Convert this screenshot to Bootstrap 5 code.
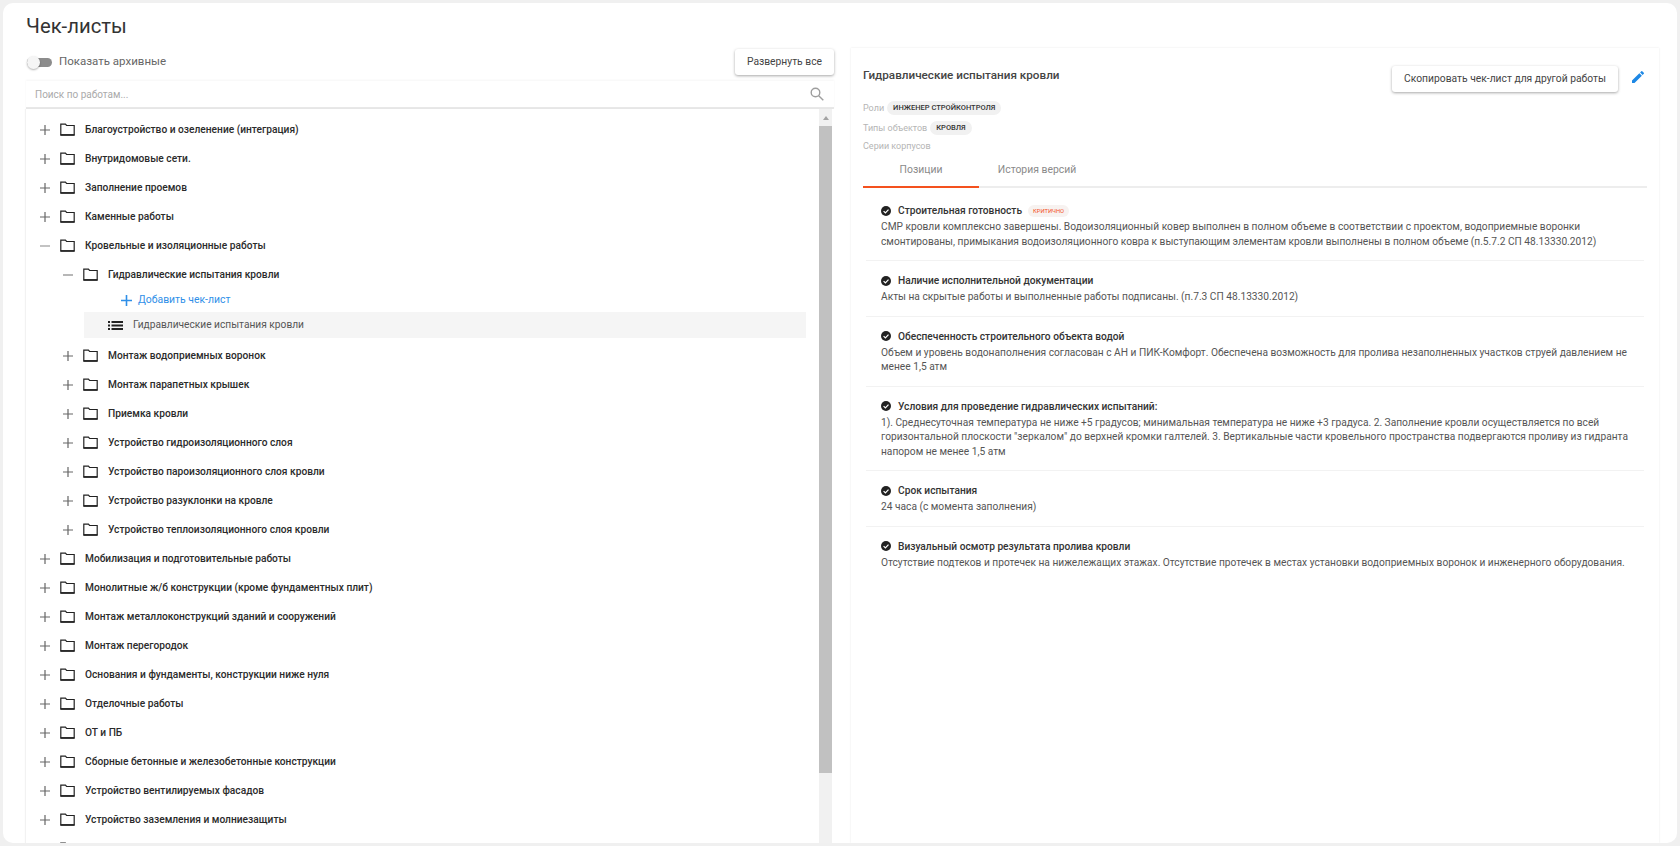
<!DOCTYPE html>
<html lang="ru">
<head>
  <meta charset="UTF-8">
  <title>Чек-листы</title>
  <link href="https://cdn.jsdelivr.net/npm/bootstrap@5.3.0/dist/css/bootstrap.min.css" rel="stylesheet">
  <style>
    html, body { height: 100%; overflow: hidden; }
    body {
      background: #f0f0f0;
      padding: 3px;
      font-family: Roboto, "Liberation Sans", sans-serif;
      font-size: 10.2px;
      color: #444;
    }
    .page-frame {
      height: 840px;
      background: #fff;
      border-radius: 10px;
      padding: 0 18px 0 23px;
      overflow: hidden;
    }
    .page-title { font-size: 20.3px; font-weight: 400; line-height: 24px; margin: 0; padding-top: 11px; height: 43px; color: #333; }
    .left-col { width: 808px; flex: none; }
    .right-col { width: 808px; margin: 2px 0 0 17px; height: 795px; padding: 0 12px; box-shadow: 0 0 2px rgba(0,0,0,.09); }
    .top-row { height: 32px; }
    .toggle-track { width: 25px; height: 9px; margin: 0 7px 0 1px; background: #8c8c8c; border-radius: 5px; position: relative; display: inline-block; }
    .toggle-knob { position: absolute; left: 0; top: -2px; width: 13px; height: 13px; border-radius: 50%; background: #f5f5f5; box-shadow: 0 1px 2px rgba(0,0,0,.3); }
    .toggle-label { font-size: 11.5px; color: #666; }
    .raised-btn {
      background: #fff;
      border: 0;
      border-radius: 3px;
      box-shadow: 0 1px 3px rgba(0,0,0,.35);
      font-size: 10.3px;
      color: #444;
      height: 26px;
      padding: 0 12px;
    }
    .search-box { height: 28px; border-bottom: 2px solid #e8e8e8; padding: 0 10px 0 9px; margin-top: 3px; box-shadow: 0 -1px 2px rgba(0,0,0,.04); }
    .search-hint { font-size: 10px; color: #aaa; }
    .tree-wrap { height: 734px; box-shadow: -1px 0 1px rgba(0,0,0,.05); }
    .tree-body { overflow: hidden; padding: 6px 13px 0 0; }
    .tree-row { height: 29px; font-weight: 500; font-size: 10.2px; color: #2b2b2b; }
    .tree-row .tree-sign { width: 12px; margin-left: 13px; margin-right: 9px; flex: none; }
    .tree-row .tree-folder { margin-right: 10px; flex: none; }
    .level-2 { padding-left: 23px; }
    .add-row { height: 22px; padding-left: 95px; color: #2f8fe8; font-size: 10.4px; }
    .add-row svg { margin-right: 6px; }
    .leaf-row { height: 26px; margin: 1px 0 3px 58px; background: #f5f5f5; padding-left: 24px; font-size: 10.2px; color: #555; }
    .leaf-row svg { margin-right: 10px; }
    .fake-scroll { width: 13px; margin-right: 2px; background: #f1f1f1; flex: none; }
    .scroll-arrow { width: 0; height: 0; border-left: 3.5px solid transparent; border-right: 3.5px solid transparent; border-bottom: 4px solid #a3a3a3; margin: 7px auto 6px; }
    .scroll-thumb { height: 647px; background: #c1c1c1; }
    .detail-head { height: 53px; padding-top: 18px; }
    .detail-title { font-size: 11.7px; font-weight: 500; color: #444; line-height: 18px; }
    .pencil-icon { margin: -4px 1px 0 12px; }
    .meta-row { font-size: 9px; color: #b5b5b5; line-height: 14px; }
    .meta-gap { margin-top: 6px; }
    .meta-last { margin-top: 4px; }
    .meta-chip { background: #f1f1f1; border-radius: 7px; height: 14px; line-height: 14px; padding: 0 6px; font-size: 7.5px; font-weight: 500; color: #333; margin-left: 3px; text-transform: uppercase; }
    .tabs-row { border-bottom: 2px solid #ededed; height: 34px; margin-top: 1px; }
    .tab-item { width: 116px; text-align: center; font-size: 10.4px; color: #8a8a8a; padding-top: 8px; margin-bottom: -2px; line-height: 16px; }
    .tab-item.is-active { border-bottom: 2px solid #f4511e; }
    .checks-list { padding: 3px 3px 0; }
    .check-item { padding: 11px 9px 11px 15px; border-bottom: 1px solid #f2f2f2; line-height: 14.5px; color: #555; font-size: 10.2px; }
    .check-item:last-child { border-bottom: 0; }
    .check-title { font-size: 10.2px; font-weight: 500; color: #333; line-height: 17px; margin-bottom: 1px; }
    .check-title svg { margin-right: 7px; }
    .crit-chip { background: #f7f2f0; border-radius: 6px; color: #f4511e; font-size: 5.8px; height: 12px; line-height: 12px; padding: 0 5px; margin-left: 6px; text-transform: uppercase; font-weight: 400; }
  </style>
</head>
<body>
  <div class="page-frame">
    <h1 class="page-title">Чек-листы</h1>
    <div class="d-flex">
      <div class="left-col">
        <div class="top-row d-flex align-items-center justify-content-between">
          <div class="d-flex align-items-center"><span class="toggle-track"><span class="toggle-knob"></span></span><span class="toggle-label">Показать архивные</span></div>
          <button type="button" class="raised-btn">Развернуть все</button>
        </div>
        <div class="search-box d-flex align-items-center justify-content-between">
          <span class="search-hint">Поиск по работам...</span>
          <svg width="14" height="14" viewBox="0 0 14 14" fill="none" stroke="#9e9e9e" stroke-width="1.4"><circle cx="5.5" cy="5.5" r="4.3"/><path d="M8.7 8.7 13.3 13.3"/></svg>
        </div>
        <div class="tree-wrap d-flex">
          <div id="tree" class="tree-body flex-grow-1"></div>
          <div class="fake-scroll"><div class="scroll-arrow"></div><div class="scroll-thumb"></div></div>
        </div>
      </div>
      <div class="right-col">
        <div class="detail-head d-flex justify-content-between align-items-start">
          <div class="detail-title">Гидравлические испытания кровли</div>
          <div class="d-flex align-items-center">
            <button type="button" class="raised-btn">Скопировать чек-лист для другой работы</button>
            <svg class="pencil-icon" width="16" height="16" viewBox="0 0 24 24" fill="#1e88e5"><path d="M3 17.25V21h3.75L17.81 9.94l-3.75-3.75L3 17.25zM20.71 7.04a1 1 0 0 0 0-1.41l-2.34-2.34a1 1 0 0 0-1.41 0l-1.83 1.83 3.75 3.75 1.83-1.83z"/></svg>
          </div>
        </div>
        <div class="meta-row d-flex align-items-center">Роли <span class="meta-chip">Инженер стройконтроля</span></div>
        <div class="meta-row meta-gap d-flex align-items-center">Типы объектов <span class="meta-chip">Кровля</span></div>
        <div class="meta-row meta-last">Серии корпусов</div>
        <div class="tabs-row d-flex">
          <div class="tab-item is-active">Позиции</div>
          <div class="tab-item">История версий</div>
        </div>
        <div id="checks" class="checks-list"></div>
      </div>
    </div>
  </div>

  <script>
    const folderIcon = '<svg class="tree-folder" width="15" height="13" viewBox="0 0 15 13" fill="none" stroke="#222"><path d="M.8 11.9V1.2h4.6l1.2 1.3h7.6v9.4z" stroke-width="1.2"/><path d="M.5 12h14" stroke-width="1.6"/></svg>';
    const plusIcon = '<svg class="tree-sign" width="12" height="12" viewBox="0 0 12 12" stroke="#666" stroke-width="1.2"><path d="M1 6h10M6 1v10"/></svg>';
    const minusIcon = '<svg class="tree-sign" width="12" height="12" viewBox="0 0 12 12" stroke="#888" stroke-width="1.2"><path d="M1 6h10"/></svg>';
    const checkIcon = '<svg width="10" height="10" viewBox="0 0 10 10"><circle cx="5" cy="5" r="5" fill="#222"/><path d="M2.6 5.1 4.4 6.9 7.5 3.6" fill="none" stroke="#fff" stroke-width="1.2"/></svg>';

    function row(name, open, nested) {
      return `<div class="tree-row d-flex align-items-center ${nested ? 'level-2' : ''}">${open ? minusIcon : plusIcon}${folderIcon}<span>${name}</span></div>`;
    }

    const before = ['Благоустройство и озеленение (интеграция)', 'Внутридомовые сети.', 'Заполнение проемов', 'Каменные работы'];
    const nested = ['Монтаж водоприемных воронок', 'Монтаж парапетных крышек', 'Приемка кровли', 'Устройство гидроизоляционного слоя', 'Устройство пароизоляционного слоя кровли', 'Устройство разуклонки на кровле', 'Устройство теплоизоляционного слоя кровли'];
    // last row is only a sliver at the window edge, its name can't be read
    const after = ['Мобилизация и подготовительные работы', 'Монолитные ж/б конструкции (кроме фундаментных плит)', 'Монтаж металлоконструкций зданий и сооружений', 'Монтаж перегородок', 'Основания и фундаменты, конструкции ниже нуля', 'Отделочные работы', 'ОТ и ПБ', 'Сборные бетонные и железобетонные конструкции', 'Устройство вентилируемых фасадов', 'Устройство заземления и молниезащиты', ''];

    let html = before.map(n => row(n)).join('');
    html += row('Кровельные и изоляционные работы', true);
    html += row('Гидравлические испытания кровли', true, true);
    html += '<div class="add-row d-flex align-items-center"><svg width="11" height="11" viewBox="0 0 11 11" stroke="#2f8fe8" stroke-width="1.6"><path d="M0 5.5h11M5.5 0v11"/></svg>Добавить чек-лист</div>';
    html += '<div class="leaf-row d-flex align-items-center"><svg width="15" height="9" viewBox="0 0 15 9" fill="#222"><path d="M0 0h2v2H0zM3.5 0H15v2H3.5zM0 3.5h2v2H0zM3.5 3.5H15v2H3.5zM0 7h2v2H0zM3.5 7H15v2H3.5z"/></svg>Гидравлические испытания кровли</div>';
    html += nested.map(n => row(n, false, true)).join('');
    html += after.map(n => row(n)).join('');
    document.getElementById('tree').innerHTML = html;

    const checks = [
      ['Строительная готовность', true, 'СМР кровли комплексно завершены. Водоизоляционный ковер выполнен в полном объеме в соответствии с проектом, водоприемные воронки смонтированы, примыкания водоизоляционного ковра к выступающим элементам кровли выполнены в полном объеме (п.5.7.2 СП 48.13330.2012)'],
      ['Наличие исполнительной документации', false, 'Акты на скрытые работы и выполненные работы подписаны. (п.7.3 СП 48.13330.2012)'],
      ['Обеспеченность строительного объекта водой', false, 'Объем и уровень водонаполнения согласован с АН и ПИК-Комфорт. Обеспечена возможность для пролива незаполненных участков струей давлением не менее 1,5 атм'],
      ['Условия для проведение гидравлических испытаний:', false, '1). Среднесуточная температура не ниже +5 градусов; минимальная температура не ниже +3 градуса. 2. Заполнение кровли осуществляется по всей горизонтальной плоскости "зеркалом" до верхней кромки галтелей. 3. Вертикальные части кровельного пространства подвергаются проливу из гидранта напором не менее 1,5 атм'],
      ['Срок испытания', false, '24 часа (с момента заполнения)'],
      ['Визуальный осмотр результата пролива кровли', false, 'Отсутствие подтеков и протечек на нижележащих этажах. Отсутствие протечек в местах установки водоприемных воронок и инженерного оборудования.']
    ];
    document.getElementById('checks').innerHTML = checks.map(c => `
      <div class="check-item">
        <div class="check-title d-flex align-items-center">${checkIcon}<span>${c[0]}</span>${c[1] ? '<span class="crit-chip">Критично</span>' : ''}</div>
        <div>${c[2]}</div>
      </div>`).join('');
  </script>
  <script src="https://cdn.jsdelivr.net/npm/bootstrap@5.3.0/dist/js/bootstrap.bundle.min.js"></script>
</body>
</html>
